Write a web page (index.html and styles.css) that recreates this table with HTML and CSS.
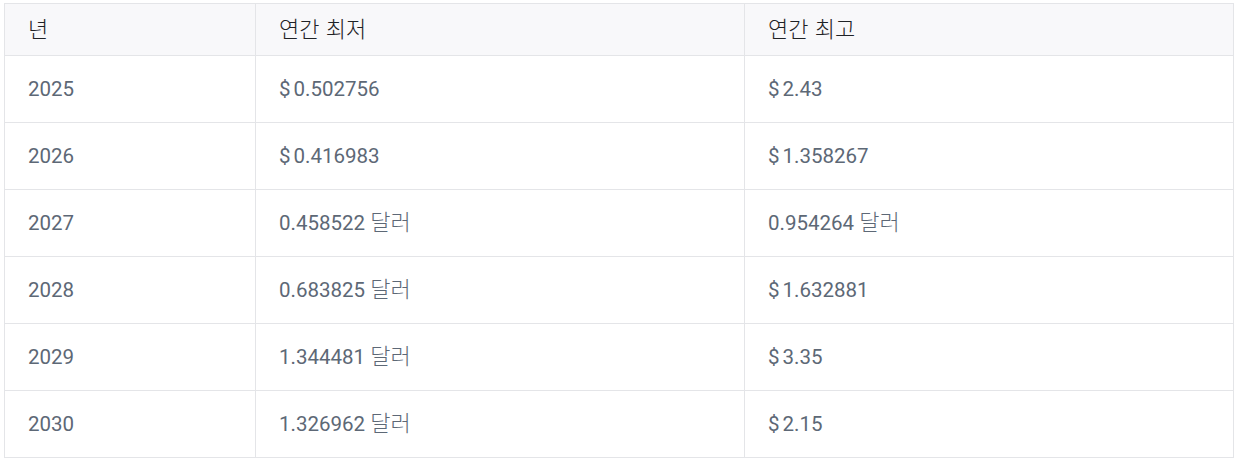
FILE: index.html
```html
<!DOCTYPE html>
<html lang="ko">
<head>
<meta charset="utf-8">
<link rel="stylesheet" href="styles.css">
</head>
<body>
<table class="price-table">
  <thead>
    <tr><th class="c-year"><span class="ko">년</span></th><th class="c-low"><span class="ko">연간 최저</span></th><th class="c-high"><span class="ko">연간 최고</span></th></tr>
  </thead>
  <tbody>
    <tr><td>2025</td><td><span class="cur">$</span>0.502756</td><td><span class="cur">$</span>2.43</td></tr>
    <tr><td>2026</td><td><span class="cur">$</span>0.416983</td><td><span class="cur">$</span>1.358267</td></tr>
    <tr><td>2027</td><td>0.458522 <span class="ko">달러</span></td><td>0.954264 <span class="ko">달러</span></td></tr>
    <tr><td>2028</td><td>0.683825 <span class="ko">달러</span></td><td><span class="cur">$</span>1.632881</td></tr>
    <tr><td>2029</td><td>1.344481 <span class="ko">달러</span></td><td><span class="cur">$</span>3.35</td></tr>
    <tr><td>2030</td><td>1.326962 <span class="ko">달러</span></td><td><span class="cur">$</span>2.15</td></tr>
  </tbody>
</table>
</body>
</html>
```
FILE: styles.css
```css
html, body {
  margin: 0;
  padding: 0;
  background: #ffffff;
}
body {
  padding: 3px 4px 0 4px;
  font-family: Roboto, "Noto Sans CJK KR", sans-serif;
}
.price-table {
  width: 1230px;
  border-collapse: collapse;
  table-layout: fixed;
}
.price-table th,
.price-table td {
  box-sizing: border-box;
  border: 1px solid #e4e5e8;
  padding: 0 0 0 23px;
  text-align: left;
  font-size: 20.5px;
  font-weight: 400;
  line-height: 34px;
  white-space: nowrap;
}
.price-table th {
  height: 52px;
  background: #f8f8fa;
  color: #1f2226;
}
.price-table td {
  height: 67px;
  color: #5d6876;
}
.c-year { width: 251px; }
.c-low { width: 489px; }
.cur { margin-right: 3px; }
.ko {
  font-family: "Noto Sans CJK KR", sans-serif;
  font-size: 22px;
  font-weight: 300;
  line-height: 1;
  vertical-align: 0;
}
```
